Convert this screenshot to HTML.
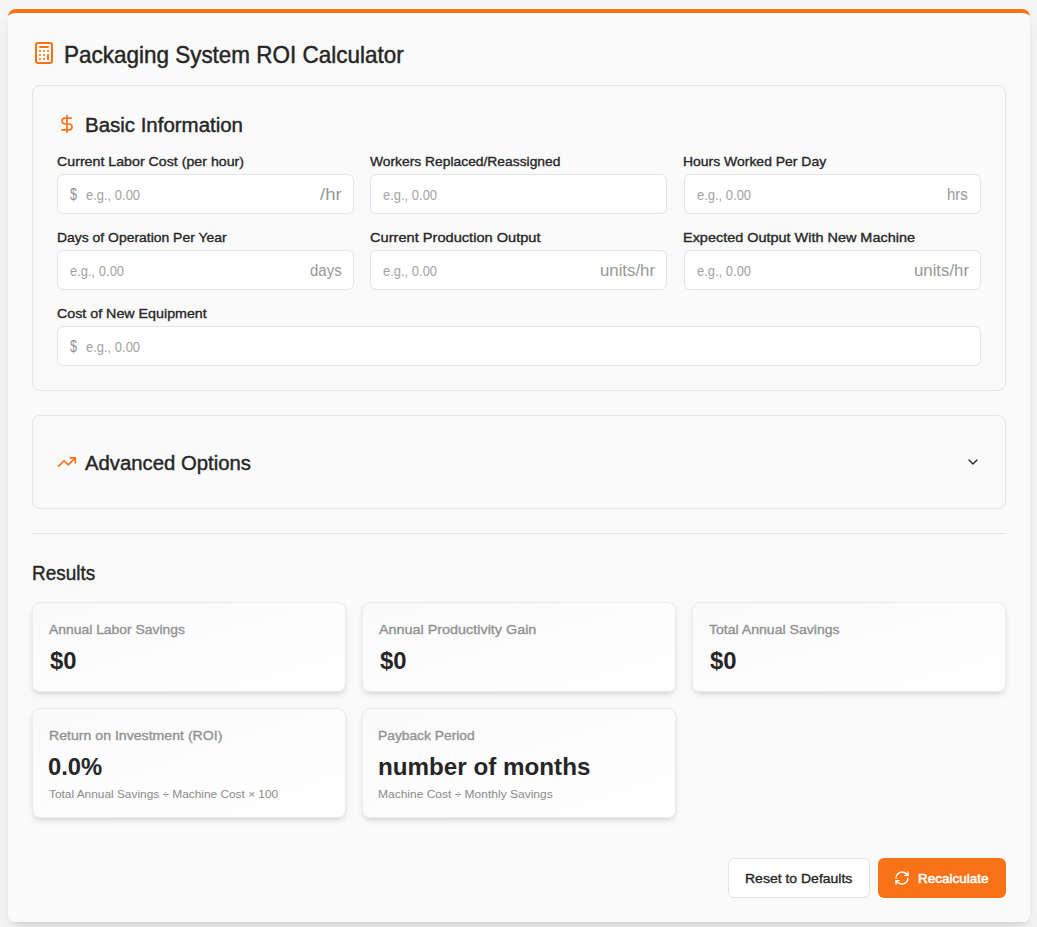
<!DOCTYPE html>
<html lang="en">
<head>
<meta charset="utf-8">
<title>Packaging System ROI Calculator</title>
<style>
*{box-sizing:border-box;margin:0;padding:0}
html,body{width:1037px;height:927px;overflow:hidden}
body{background:#f5f5f5;font-family:"Liberation Sans",Arial,sans-serif;color:#262626;position:relative}
.card{position:absolute;left:8px;top:9px;width:1022px;height:913px;background:#fafafa;border-top:4px solid #f97316;border-radius:8px 8px 6.5px 6.5px;box-shadow:0 10px 15px -3px rgba(0,0,0,.1),0 4px 6px -4px rgba(0,0,0,.1)}
.abs{position:absolute}
.t{position:absolute;display:block;white-space:nowrap;transform-origin:0 50%}
.panel{position:absolute;left:24px;width:974px;border:1px solid #e5e5e5;border-radius:8px}
.inp{position:absolute;height:40px;background:#fff;border:1px solid #e5e5e5;border-radius:6px}
.hr{position:absolute;left:24px;width:974px;height:1px;background:#e5e5e5}
.res{position:absolute;width:314px;background:linear-gradient(to bottom right,#fafafa,#fff);border:1px solid #ebebeb;border-radius:8px;box-shadow:0 4px 6px -1px rgba(0,0,0,.1),0 2px 4px -2px rgba(0,0,0,.1)}
.btn{position:absolute;height:40px;border-radius:6px}
.b1{background:#fff;border:1px solid #e5e5e5}
.b2{background:#f97316}
</style>
</head>
<body>
<div class="card">

<svg class="abs" style="left:24px;top:28px" width="24" height="24" viewBox="0 0 24 24" fill="none" stroke="#f97316" stroke-width="2" stroke-linecap="round" stroke-linejoin="round"><rect x="4" y="2" width="16" height="20" rx="2"/><line x1="8" y1="6" x2="16" y2="6"/><line x1="16" y1="14" x2="16" y2="18"/><path d="M16 10h.01M12 10h.01M8 10h.01M12 14h.01M8 14h.01M12 18h.01M8 18h.01"/></svg>

<div class="panel" style="top:72px;height:306px"></div>
<svg class="abs" style="left:49px;top:101px" width="20" height="20" viewBox="0 0 24 24" fill="none" stroke="#f97316" stroke-width="2" stroke-linecap="round" stroke-linejoin="round"><line x1="12" y1="2" x2="12" y2="22"/><path d="M17 5H9.5a3.5 3.5 0 0 0 0 7h5a3.5 3.5 0 0 1 0 7H6"/></svg>
<div class="inp" style="left:49px;top:161px;width:297px"></div>
<div class="inp" style="left:362px;top:161px;width:297px"></div>
<div class="inp" style="left:676px;top:161px;width:297px"></div>
<div class="inp" style="left:49px;top:237px;width:297px"></div>
<div class="inp" style="left:362px;top:237px;width:297px"></div>
<div class="inp" style="left:676px;top:237px;width:297px"></div>
<div class="inp" style="left:49px;top:313px;width:924px"></div>

<div class="panel" style="top:402px;height:94px"></div>
<svg class="abs" style="left:49px;top:439px" width="20" height="20" viewBox="0 0 24 24" fill="none" stroke="#f97316" stroke-width="2" stroke-linecap="round" stroke-linejoin="round"><polyline points="22 7 13.5 15.5 8.5 10.5 2 17"/><polyline points="16 7 22 7 22 13"/></svg>
<svg class="abs" style="left:957px;top:441px" width="16" height="16" viewBox="0 0 24 24" fill="none" stroke="#262626" stroke-width="2" stroke-linecap="round" stroke-linejoin="round"><path d="m6 9 6 6 6-6"/></svg>

<div class="hr" style="top:520px"></div>

<div class="res" style="left:24px;top:589px;height:90px"></div>
<div class="res" style="left:354px;top:589px;height:90px"></div>
<div class="res" style="left:684px;top:589px;height:90px"></div>
<div class="res" style="left:24px;top:695px;height:110px"></div>
<div class="res" style="left:354px;top:695px;height:110px"></div>

<div class="btn b1" style="left:720px;top:845px;width:142px"></div>
<div class="btn b2" style="left:870px;top:845px;width:128px"></div>
<svg class="abs" style="left:886px;top:857px" width="16" height="16" viewBox="0 0 24 24" fill="none" stroke="#fff" stroke-width="2" stroke-linecap="round" stroke-linejoin="round"><path d="M3 12a9 9 0 0 1 9-9 9.75 9.75 0 0 1 6.74 2.74L21 8"/><path d="M21 3v5h-5"/><path d="M21 12a9 9 0 0 1-9 9 9.75 9.75 0 0 1-6.74-2.74L3 16"/><path d="M8 16H3v5"/></svg>
<span id="title" class="t" style="left:56px;top:26.25px;font-size:23.2px;line-height:32px;font-weight:400;color:#262626;-webkit-text-stroke:0.45px #262626;transform:scaleX(0.9690)">Packaging System ROI Calculator</span>
<span id="h_basic" class="t" style="left:77px;top:98.25px;font-size:19.5px;line-height:28px;font-weight:400;color:#262626;-webkit-text-stroke:0.4px #262626;transform:scaleX(1.0487)">Basic Information</span>
<span id="l1" class="t" style="left:49px;top:139.25px;font-size:13.6px;line-height:20px;font-weight:400;color:#262626;-webkit-text-stroke:0.35px #262626;transform:scaleX(1.0447)">Current Labor Cost (per hour)</span>
<span id="l2" class="t" style="left:362px;top:139.25px;font-size:13.6px;line-height:20px;font-weight:400;color:#262626;-webkit-text-stroke:0.35px #262626;transform:scaleX(1.0176)">Workers Replaced/Reassigned</span>
<span id="l3" class="t" style="left:675px;top:139.25px;font-size:13.6px;line-height:20px;font-weight:400;color:#262626;-webkit-text-stroke:0.35px #262626;transform:scaleX(1.0261)">Hours Worked Per Day</span>
<span id="l4" class="t" style="left:49px;top:215.25px;font-size:13.6px;line-height:20px;font-weight:400;color:#262626;-webkit-text-stroke:0.35px #262626;transform:scaleX(1.0246)">Days of Operation Per Year</span>
<span id="l5" class="t" style="left:362px;top:215.25px;font-size:13.6px;line-height:20px;font-weight:400;color:#262626;-webkit-text-stroke:0.35px #262626;transform:scaleX(1.0748)">Current Production Output</span>
<span id="l6" class="t" style="left:675px;top:215.25px;font-size:13.6px;line-height:20px;font-weight:400;color:#262626;-webkit-text-stroke:0.35px #262626;transform:scaleX(1.0622)">Expected Output With New Machine</span>
<span id="l7" class="t" style="left:49px;top:291.25px;font-size:13.6px;line-height:20px;font-weight:400;color:#262626;-webkit-text-stroke:0.35px #262626;transform:scaleX(1.0487)">Cost of New Equipment</span>
<span id="d1" class="t" style="left:62px;top:172.25px;font-size:16px;line-height:20px;font-weight:400;color:#8f8f8f;transform:scaleX(0.7813)">$</span>
<span id="d2" class="t" style="left:62px;top:324.25px;font-size:16px;line-height:20px;font-weight:400;color:#8f8f8f;transform:scaleX(0.7813)">$</span>
<span id="p1" class="t" style="left:78px;top:172.25px;font-size:14.4px;line-height:20px;font-weight:400;color:#a3a3a3;transform:scaleX(0.9007)">e.g., 0.00</span>
<span id="p2" class="t" style="left:375px;top:172.25px;font-size:14.4px;line-height:20px;font-weight:400;color:#a3a3a3;transform:scaleX(0.9007)">e.g., 0.00</span>
<span id="p3" class="t" style="left:689px;top:172.25px;font-size:14.4px;line-height:20px;font-weight:400;color:#a3a3a3;transform:scaleX(0.9007)">e.g., 0.00</span>
<span id="p4" class="t" style="left:62px;top:248.25px;font-size:14.4px;line-height:20px;font-weight:400;color:#a3a3a3;transform:scaleX(0.9007)">e.g., 0.00</span>
<span id="p5" class="t" style="left:375px;top:248.25px;font-size:14.4px;line-height:20px;font-weight:400;color:#a3a3a3;transform:scaleX(0.9007)">e.g., 0.00</span>
<span id="p6" class="t" style="left:689px;top:248.25px;font-size:14.4px;line-height:20px;font-weight:400;color:#a3a3a3;transform:scaleX(0.9007)">e.g., 0.00</span>
<span id="p7" class="t" style="left:78px;top:324.25px;font-size:14.4px;line-height:20px;font-weight:400;color:#a3a3a3;transform:scaleX(0.9007)">e.g., 0.00</span>
<span id="s1" class="t" style="left:312px;top:170.25px;font-size:15.6px;line-height:24px;font-weight:400;color:#989898;transform:scaleX(1.1914)">/hr</span>
<span id="s3" class="t" style="left:939px;top:170.25px;font-size:15.6px;line-height:24px;font-weight:400;color:#989898;transform:scaleX(0.9614)">hrs</span>
<span id="s4" class="t" style="left:302px;top:246.25px;font-size:15.6px;line-height:24px;font-weight:400;color:#989898;transform:scaleX(0.9619)">days</span>
<span id="s5" class="t" style="left:592px;top:246.25px;font-size:15.6px;line-height:24px;font-weight:400;color:#989898;transform:scaleX(1.0752)">units/hr</span>
<span id="s6" class="t" style="left:906px;top:246.25px;font-size:15.6px;line-height:24px;font-weight:400;color:#989898;transform:scaleX(1.0752)">units/hr</span>
<span id="h_adv" class="t" style="left:77px;top:436.25px;font-size:19.5px;line-height:28px;font-weight:400;color:#262626;-webkit-text-stroke:0.4px #262626;transform:scaleX(1.0414)">Advanced Options</span>
<span id="h_res" class="t" style="left:24px;top:546.25px;font-size:19.5px;line-height:28px;font-weight:400;color:#262626;-webkit-text-stroke:0.4px #262626;transform:scaleX(0.9714)">Results</span>
<span id="r1" class="t" style="left:41px;top:607.25px;font-size:13.6px;line-height:20px;font-weight:400;color:#929292;-webkit-text-stroke:0.35px #929292;transform:scaleX(1.0225)">Annual Labor Savings</span>
<span id="r2" class="t" style="left:371px;top:607.25px;font-size:13.6px;line-height:20px;font-weight:400;color:#929292;-webkit-text-stroke:0.35px #929292;transform:scaleX(1.0570)">Annual Productivity Gain</span>
<span id="r3" class="t" style="left:701px;top:607.25px;font-size:13.6px;line-height:20px;font-weight:400;color:#929292;-webkit-text-stroke:0.35px #929292;transform:scaleX(1.0348)">Total Annual Savings</span>
<span id="r4" class="t" style="left:41px;top:713.25px;font-size:13.6px;line-height:20px;font-weight:400;color:#929292;-webkit-text-stroke:0.35px #929292;transform:scaleX(1.0386)">Return on Investment (ROI)</span>
<span id="r5" class="t" style="left:370px;top:713.25px;font-size:13.6px;line-height:20px;font-weight:400;color:#929292;-webkit-text-stroke:0.35px #929292;transform:scaleX(1.0150)">Payback Period</span>
<span id="v1" class="t" style="left:42px;top:632.25px;font-size:23.4px;line-height:32px;font-weight:700;color:#262626;transform:scaleX(1.0201)">$0</span>
<span id="v2" class="t" style="left:372px;top:632.25px;font-size:23.4px;line-height:32px;font-weight:700;color:#262626;transform:scaleX(1.0203)">$0</span>
<span id="v3" class="t" style="left:702px;top:632.25px;font-size:23.4px;line-height:32px;font-weight:700;color:#262626;transform:scaleX(1.0201)">$0</span>
<span id="v4" class="t" style="left:40px;top:738.25px;font-size:23.4px;line-height:32px;font-weight:700;color:#262626;transform:scaleX(1.0174)">0.0%</span>
<span id="v5" class="t" style="left:370px;top:738.25px;font-size:23.4px;line-height:32px;font-weight:700;color:#262626;transform:scaleX(1.0346)">number of months</span>
<span id="m4" class="t" style="left:41px;top:773.25px;font-size:11.7px;line-height:16px;font-weight:400;color:#8a8a8a;transform:scaleX(1.0154)">Total Annual Savings ÷ Machine Cost × 100</span>
<span id="m5" class="t" style="left:370px;top:773.25px;font-size:11.7px;line-height:16px;font-weight:400;color:#8a8a8a;transform:scaleX(1.0268)">Machine Cost ÷ Monthly Savings</span>
<span id="b1" class="t" style="left:737px;top:856.25px;font-size:13.6px;line-height:20px;font-weight:400;color:#262626;-webkit-text-stroke:0.35px #262626;transform:scaleX(1.0293)">Reset to Defaults</span>
<span id="b2" class="t" style="left:910px;top:856.25px;font-size:13.6px;line-height:20px;font-weight:400;color:#ffffff;-webkit-text-stroke:0.5px #ffffff;transform:scaleX(0.9943)">Recalculate</span>
</div>
</body>
</html>
